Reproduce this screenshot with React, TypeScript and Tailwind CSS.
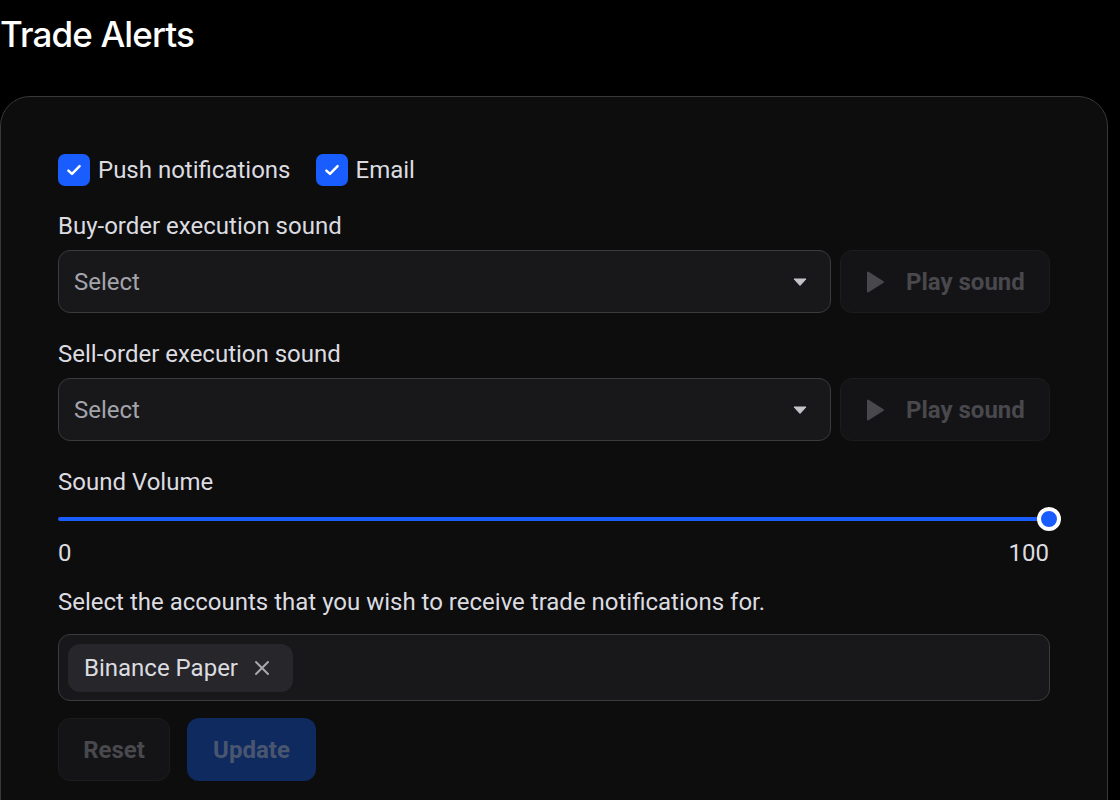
import React from "react"

// Small filled caret for the select boxes
const Caret = () => (
  <svg width="14" height="8" viewBox="0 0 14 8" className="shrink-0">
    <path d="M1 1h12L7 7.5z" fill="#c4c4cc" strokeLinejoin="round" stroke="#c4c4cc" strokeWidth="1" />
  </svg>
)

const PlayIcon = () => (
  <svg width="20" height="24" viewBox="0 0 20 24" className="shrink-0">
    <path d="M3 2.5v19l15-9.5z" fill="#48484d" stroke="#48484d" strokeWidth="2" strokeLinejoin="round" />
  </svg>
)

const Check = ({ label }: { label: string }) => (
  <label className="flex items-center gap-2">
    <span className="flex h-8 w-8 items-center justify-center rounded-[7px] bg-[#1a5dff]">
      <svg width="18" height="18" viewBox="0 0 16 16">
        <path d="M3 8.5l3.2 3L13 4.5" fill="none" stroke="#fff" strokeWidth="2.2" strokeLinecap="round" strokeLinejoin="round" />
      </svg>
    </span>
    <span className="text-[24px] leading-8 text-[#dcdce0]">{label}</span>
  </label>
)

const SoundRow = ({ label, first }: { label: string; first?: boolean }) => (
  <>
    <div className={first ? "mt-[26px] text-[24px] leading-7 text-[#dcdce0]" : "mt-[27px] text-[24px] leading-7 text-[#dcdce0]"}>
      {label}
    </div>
    <div className="mt-[10px] flex h-[63px] gap-[9px]">
      <div className="flex flex-1 items-center justify-between rounded-[12px] border border-[#3a3a3f] bg-[#18181b] pl-[15px] pr-[23px]">
        <span className="text-[24px] text-[#a4a4ab]">Select</span>
        <Caret />
      </div>
      <button className="flex w-[210px] items-center gap-[21px] rounded-[12px] border border-[#1c1c1f] bg-[#141416] pl-[24px] text-[24px] font-bold text-[#48484d]">
        <PlayIcon />
        Play sound
      </button>
    </div>
  </>
)

export default function App() {
  return (
    <div className="min-h-screen overflow-hidden bg-black font-['Roboto',sans-serif]">
      <h1 className="mt-[14px] font-['Inter',sans-serif] text-[35px] font-medium leading-10 tracking-[-0.025em] text-white">
        Trade Alerts
      </h1>

      <div className="mt-[42px] h-[760px] w-[1108px] rounded-[30px] border border-[#38383d] bg-[#0d0d0e] px-[57px] pt-[57px]">
        {/* Channels */}
        <div className="flex h-8 items-center gap-[25px]">
          <Check label="Push notifications" />
          <Check label="Email" />
        </div>

        <SoundRow label="Buy-order execution sound" first />
        <SoundRow label="Sell-order execution sound" />

        {/* Volume */}
        <div className="mt-[27px] text-[24px] leading-7 text-[#dcdce0]">Sound Volume</div>
        <div className="relative mt-[11px] flex h-6 items-center">
          <div className="h-1 w-full rounded-full bg-[#1a5dff]" />
          <div className="absolute right-[-11px] top-0 h-6 w-6 rounded-full border-[4px] border-white bg-[#1a5dff]" />
        </div>
        <div className="mt-[8px] flex justify-between pr-px text-[24px] leading-7 text-[#dcdce0]">
          <span>0</span>
          <span>100</span>
        </div>

        <div className="mt-[21px] text-[24px] leading-7 text-[#dcdce0]">
          Select the accounts that you wish to receive trade notifications for.
        </div>
        <div className="mt-[18px] flex h-[67px] items-center rounded-[12px] border border-[#3a3a3f] bg-[#18181b] px-[9px]">
          <div className="flex h-12 items-center gap-4 rounded-[12px] bg-[#27272b] pl-4 pr-[23px]">
            <span className="text-[24px] text-[#dcdce0]">Binance Paper</span>
            <svg width="16" height="16" viewBox="0 0 16 16">
              <path d="M2 2l12 12M14 2L2 14" stroke="#a8a8b0" strokeWidth="2" strokeLinecap="round" />
            </svg>
          </div>
        </div>

        <div className="mt-[17px] flex h-[63px] gap-[17px]">
          <button className="w-[112px] rounded-[12px] border border-[#1c1c1f] bg-[#141416] text-[24px] font-bold text-[#48484d]">
            Reset
          </button>
          <button className="w-[129px] rounded-[12px] bg-[#0f2a5e] text-[24px] font-bold text-[#4a5670]">
            Update
          </button>
        </div>
      </div>
    </div>
  )
}
